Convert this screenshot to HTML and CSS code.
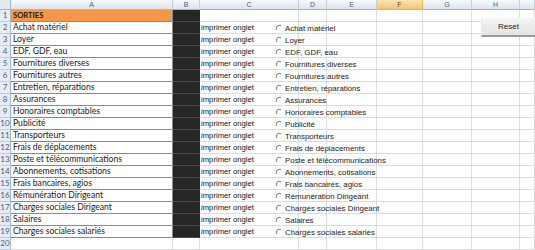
FILE: index.html
```html
<!DOCTYPE html>
<html lang="fr">
<head>
    <meta charset="UTF-8">
    <meta name="viewport" content="width=device-width, initial-scale=1.0">
    <title>Sorties</title>
    <link rel="stylesheet" href="styles.css">
</head>
<body>

<div id="sheet">
    <div id="grid"></div>
    <div id="options"></div>
    <button type="button" class="reset-btn">Reset</button>
</div>

<script>
    const columns = ['A', 'B', 'C', 'D', 'E', 'F', 'G', 'H', ''];
    const sorties = [
        'Achat matériel', 'Loyer', 'EDF, GDF, eau', 'Fournitures diverses',
        'Fournitures autres', 'Entretien, réparations', 'Assurances',
        'Honoraires comptables', 'Publicité', 'Transporteurs',
        'Frais de déplacements', 'Poste et télécommunications',
        'Abonnements, cotisations', 'Frais bancaires, agios',
        'Rémunération Dirigeant', 'Charges sociales Dirigeant', 'Salaires',
        'Charges sociales salariés'
    ];

    const grid = document.getElementById('grid');

    function addCell(cls, text) {
        const div = document.createElement('div');
        div.className = 'cell ' + cls;
        div.textContent = text || '';
        grid.appendChild(div);
    }

    addCell('corner');
    columns.forEach(c => addCell(c === 'F' ? 'col-head selected' : 'col-head', c));

    for (let r = 1; r <= 20; r++) {
        addCell('row-head', r);
        if (r === 1) {
            addCell('a title', 'SORTIES');
        } else {
            addCell(r <= 19 ? 'a' : 'plain', sorties[r - 2]);
        }
        addCell(r <= 19 ? 'b' : 'plain');
        addCell('c', r >= 2 && r <= 19 ? 'imprimer onglet' : '');
        for (let i = 0; i < 6; i++) addCell('plain');
    }

    const options = document.getElementById('options');
    sorties.forEach(label => {
        const opt = document.createElement('label');
        opt.className = 'option';
        opt.innerHTML = `
            <svg width="8" height="8" viewBox="0 0 8 8"><path d="M1.9 6.1 A3 3 0 0 1 6.1 1.9" fill="none" stroke="#7a7a7a" stroke-width="1"/></svg>
            <span>${label}</span>
        `;
        options.appendChild(opt);
    });
</script>

</body>
</html>
```

FILE: styles.css
```css
body {
    margin: 0;
    padding: 0;
    background-color: #fff;
    overflow: hidden;
}

#sheet {
    position: relative;
    width: 535px;
    height: 250px;
    overflow: hidden;
}

#grid {
    display: grid;
    grid-template-columns: 11px 162px 27px 99px 28px 50px 46px 49px 48px 15px;
    grid-template-rows: 10px repeat(20, 12px);
}

.cell {
    box-sizing: border-box;
    border-right: 1px solid #dadcdf;
    border-bottom: 1px solid #dadcdf;
    font-family: "Liberation Sans", Arial, sans-serif;
    font-size: 7.7px;
    line-height: 11px;
    color: #111;
    white-space: nowrap;
    overflow: hidden;
}

.corner {
    background-color: #e3e9f1;
    border-right: 1px solid #9eb6ce;
    border-bottom: 1px solid #9eb6ce;
}

.col-head {
    background: linear-gradient(#f7f9fc, #dde4ee);
    border-right: 1px solid #c3cfdd;
    border-bottom: 1px solid #9eb6ce;
    color: #4c607a;
    font-size: 7px;
    line-height: 9px;
    text-align: center;
}

.col-head.selected {
    background: linear-gradient(#fbe4b6, #f4c46c);
    border-right-color: #f0b453;
    color: #5a4a2a;
}

.row-head {
    background-color: #e6ecf4;
    border-right: 1px solid #9eb6ce;
    border-bottom: 1px solid #c3cfdd;
    color: #4c607a;
    font-family: Lato, "Liberation Sans", sans-serif;
    font-size: 8px;
    text-align: center;
}

.a {
    border-right: 1px solid #8a8a8a;
    border-bottom: 1px solid #8a8a8a;
    padding-left: 2px;
    font-family: Lato, "Liberation Sans", sans-serif;
    font-size: 8.6px;
    color: #1a1a1a;
}

.a.title {
    background-color: #f79646;
    font-weight: bold;
    font-size: 7.6px;
}

.b {
    background-color: #262626;
    border-right: 1px solid #262626;
    border-bottom: 1px solid #4a4a4a;
}

.c {
    padding-left: 1px;
}

#options {
    position: absolute;
    left: 275px;
    top: 22px;
    display: flex;
    flex-direction: column;
}

.option {
    display: flex;
    align-items: center;
    gap: 2px;
    height: 12px;
    font-family: "Liberation Sans", Arial, sans-serif;
    font-size: 7.9px;
    color: #222;
    white-space: nowrap;
}

.option svg {
    flex: none;
}

.reset-btn {
    position: absolute;
    left: 481px;
    top: 18px;
    width: 60px;
    height: 19px;
    padding: 0 6px 0 0;
    background: linear-gradient(#f4f4f4, #e4e4e4);
    border: none;
    border-left: 1px solid #e8e8e8;
    border-bottom: 2px solid #9a9a9a;
    font-family: "Liberation Sans", Arial, sans-serif;
    font-size: 8px;
    color: #222;
    cursor: pointer;
}
```
